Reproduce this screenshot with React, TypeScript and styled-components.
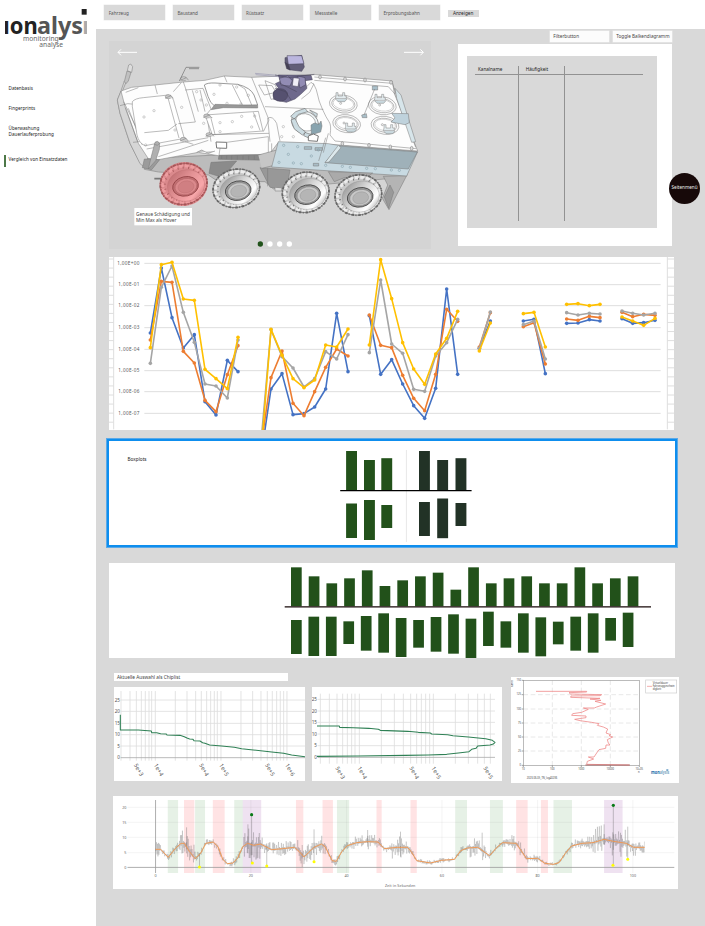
import React from "react";
import styled, { createGlobalStyle } from "styled-components";

const GlobalStyle = createGlobalStyle`
  * { box-sizing: border-box; }
  body { margin: 0; background: #fff; }
  body, text { font-family: "Noto Sans", "Open Sans", sans-serif; }
`;

const Page = styled.div`
  position: relative;
  display: grid;
  grid-template-columns: 96.3px 1fr;
  width: 705px;
  height: 926px;
  overflow: hidden;
  background: #fff;
  color: #3c3c3c;
  font-size: 4.6px;
  line-height: 6px;
`;
const Sidebar = styled.aside`
  padding-top: 8px;
`;
const LogoArt = styled.svg`
  display: block;
  margin-left: 5px;
`;
const Nav = styled.nav`
  display: flex;
  flex-direction: column;
  margin-top: 35px;
  color: #222;
`;
const NavItem = styled.a<{ $gap?: number; $active?: boolean }>`
  display: block;
  height: ${(p) => (p.$active ? 12.5 : 6)}px;
  margin: ${(p) => p.$gap ?? 0}px 0 0 4px;
  padding-left: ${(p) => (p.$active ? 2.5 : 4.5)}px;
  padding-top: ${(p) => (p.$active ? 1 : 0)}px;
  border-left: ${(p) => (p.$active ? "2px solid #4d7848" : "0")};
  white-space: nowrap;
  letter-spacing: 0.04px;
`;
const Content = styled.div`
  display: flex;
  flex-direction: column;
`;
const FilterBar = styled.header`
  display: flex;
  height: 29px;
  flex: none;
  padding: 5.4px 0 0 7.9px;
  gap: 7.7px;
`;
const FilterBox = styled.div`
  width: 61px;
  height: 15px;
  padding: 4.8px 4.5px;
  background: #d9d9d9;
  box-shadow: 0 0 0 0.5px #eee;
  color: #555;
`;
const ShowButton = styled.button`
  width: 31px;
  height: 7.4px;
  margin-top: 4.5px;
  padding: 0;
  border: 0;
  background: #d9d9d9;
  font: 4.7px/7.4px "Noto Sans", sans-serif;
  color: #222;
`;
const Workspace = styled.main`
  flex: 1;
  padding-left: 12.7px;
  background: #d9d9d9;
`;
const TopRow = styled.section`
  display: flex;
  justify-content: space-between;
  width: 563.3px;
  height: 220px;
`;
const VehiclePanel = styled.div`
  width: 322px;
  height: 208px;
  margin-top: 12px;
  background: #d4d4d4;
`;
const Art = styled.svg`
  display: block;
  overflow: hidden;
`;
const TableColumn = styled.div`
  width: 214px;
`;
const TableActions = styled.div`
  display: flex;
  justify-content: flex-end;
  gap: 3.5px;
  padding-top: 2.4px;
`;
const SmallButton = styled.button`
  width: 59.5px;
  height: 10.3px;
  padding: 0 3.5px;
  border: 0;
  background: #fcfcfc;
  box-shadow: 0 0 0 0.5px #eee;
  text-align: left;
  white-space: nowrap;
  font: 4.65px/11px "Noto Sans", sans-serif;
  color: #444;
`;
const TableCard = styled.div`
  height: 202px;
  margin-top: 2.8px;
  padding: 11.5px 15px 18px 9px;
  background: #fff;
`;
const TableSurface = styled.div`
  height: 172px;
  padding: 10px 14px 7px 8px;
  background: #d9d9d9;
`;
const Table = styled.div`
  display: grid;
  grid-template-columns: 44px 46px 1fr;
  grid-template-rows: 9.5px 1fr;
  height: 155px;
`;
const Cell = styled.div<{ $head?: boolean; $last?: boolean; $inset?: number }>`
  padding-left: ${(p) => p.$inset ?? 0}px;
  border-right: ${(p) => (p.$last ? "0" : "1px solid #929292")};
  border-bottom: ${(p) => (p.$head ? "1px solid #929292" : "0")};
  color: #222;
`;
const Panel = styled.section<{ $w: number; $h: number; $top?: number; $left?: number }>`
  width: ${(p) => p.$w}px;
  height: ${(p) => p.$h}px;
  margin: ${(p) => p.$top ?? 0}px 0 0 ${(p) => p.$left ?? 0}px;
  background: #fff;
  overflow: hidden;
`;
const SelectedPanel = styled.section`
  display: flex;
  width: 569.6px;
  height: 108px;
  margin: 9px 0 0 -2px;
  border: 2.4px solid #0e8eee;
  outline: 0.5px solid #5aa9e8;
  outline-offset: -0.5px;
  background: #fff;
`;
const PanelTitle = styled.h2`
  width: 229px;
  margin: 0;
  padding: 15.5px 0 0 18.5px;
  font: 4.7px/6px "Noto Sans", sans-serif;
  color: #222;
`;
const CompareRow = styled.section`
  display: flex;
  gap: 9px;
  margin: 15px 0 0 5px;
`;
const ChipList = styled.div`
  width: 174.5px;
  height: 8px;
  margin-bottom: 6px;
  padding-left: 3px;
  background: #fff;
  font-size: 4.75px;
  line-height: 8px;
`;
const Pair = styled.div`
  display: flex;
  gap: 6.5px;
`;
const SideMenu = styled.button`
  position: absolute;
  left: 669px;
  top: 173px;
  width: 31px;
  height: 31px;
  padding: 0 0 3px;
  border: 0;
  border-radius: 50%;
  background: #170909;
  color: #eee;
  font: 4.6px/6px "Noto Sans", sans-serif;
`;

/* ---------- logo ---------- */
const Logo = () => (
  <LogoArt width="82" height="42" viewBox="15 24 246 126">
    <g fontWeight="700" fontSize="68">
      <text x="9" y="102" fill="#222">ı</text>
      <text x="29" y="102" fill="#222" textLength="84" lengthAdjust="spacingAndGlyphs">on</text>
      <text x="111" y="102" fill="#555" textLength="138" lengthAdjust="spacingAndGlyphs">alys</text>
      <text x="247" y="102" fill="#aaa">ı</text>
    </g>
    <rect x="245" y="27" width="15" height="17" fill="#222" />
    <g fontSize="20" fill="#666">
      <text x="69" y="122" textLength="107">monitoring</text>
      <text x="118" y="140" textLength="71">analyse</text>
    </g>
  </LogoArt>
);

/* ---------- vehicle ---------- */
type Pt = [number, number];

const Wheel = ({ x, y, ry = 60, red }: { x: number; y: number; ry?: number; red?: boolean }) => (
  <g transform={`translate(${x} ${y}) rotate(-12)`} fill="none">
    <ellipse rx="71" ry={ry} fill="#c8c8c8" stroke="#666" strokeWidth="2" />
    <ellipse rx="70" ry={ry} stroke="#666" strokeWidth="6" strokeDasharray="3 4 8 5" />
    <ellipse rx="63" ry={ry - 7} stroke="#ececec" strokeWidth="9" strokeDasharray="12 5" />
    <ellipse rx="57" ry={ry - 12} stroke="#777" strokeWidth="6" strokeDasharray="3 13" />
    <ellipse cx="6" cy="6" rx="56" ry={ry - 14} fill="url(#tyre)" stroke="#888" />
    <ellipse cx="4" cy="8" rx="39" ry="29" fill="#999" stroke="#444" strokeWidth="2.5" />
    <ellipse cx="5" cy="9" rx="33" ry="24" fill="#c8c8c8" stroke="#666" />
    <ellipse cx="5" cy="10" rx="24" ry="18" fill="#b5b5b5" stroke="#888" />
    {red && <ellipse rx="73" ry="66" fill="#ef3f46" fillOpacity=".46" />}
  </g>
);

const Hatch = ({ x, y, low }: { x: number; y: number; low?: boolean }) => (
  <g transform={`translate(${x} ${y})`} fill="none" stroke="#777" strokeWidth="1.4">
    <g transform="rotate(8)">
      <ellipse rx="42" ry="27" fill="#fbfbfb" />
      <ellipse rx="35" ry="21" fill="#fff" />
      <ellipse cy="-1" rx="31" ry="17" stroke="#aaa" />
    </g>
    <g transform={`translate(${low ? 12 : -7} ${low ? 12 : -20})`}>
      <path d="M-15-4v-10h6v10h14v-10h6v10h5v8h-33z" fill="#e3ecef" />
      <path d="M-15 6l6 7h20l7-8" fill="#c9d8de" />
    </g>
    <circle cx="-8" cy="-2" r="3" />
  </g>
);

const bolts: Pt[] = [
  [147, 227], [117, 246], [230, 217], [210, 285], [122, 330], [327, 178], [366, 205], [395, 156],
  [382, 260], [345, 263], [410, 244], [430, 181], [345, 290], [408, 207], [345, 150], [296, 265],
  [449, 243], [275, 170], [288, 195], [440, 276], [304, 210], [535, 275], [530, 305], [565, 305],
];
const sideBolts: Pt[] = [
  [536, 331], [578, 335], [550, 358], [619, 363], [522, 382], [565, 384], [589, 386], [662, 391],
  [712, 394], [736, 397], [785, 400], [811, 401], [859, 405], [883, 406], [640, 345],
];

const Vehicle = () => (
  <Art width="322" height="208" viewBox="12 18 966 624">
    <defs>
      <linearGradient id="tyre" x1="0" y1="0" x2="1" y2="1">
        <stop offset="0" stopColor="#888" />
        <stop offset=".45" stopColor="#d8d8d8" />
        <stop offset=".75" stopColor="#fff" />
        <stop offset="1" stopColor="#888" />
      </linearGradient>
    </defs>
    <g stroke="#fff" strokeWidth="3" fill="none">
      <path d="M96 52H39M48 43L39 52L48 61" />
      <path d="M897 52H955M946 43L955 52L946 61" />
    </g>

    <g stroke="#777" strokeWidth="1.5" strokeLinejoin="round">
      {/* lower hull */}
      <path d="M127 370L118 403L160 411L310 420L340 440L480 440L505 462L860 430L905 422L920 380L540 350Z" fill="#bcbcbc" />
      <path d="M148 431h22M400 470h30" strokeWidth="5" />
      <path d="M318 382L395 378L372 405L345 425L312 415Z" fill="#8b8b8b" />
      <path d="M465 398L555 405L545 462L495 457Z" fill="#989898" />
      <path d="M488 400V454M510 458v10h20v-8" fill="#ddd" />
      <path d="M835 424L905 422L852 524L832 490L848 450Z" fill="#b4b4b4" />
      <path d="M855 450L866 472L851 520L838 486Z" fill="#999" />
      {/* armoured roof */}
      <path d="M48 168L80 157L150 150L235 141L300 136L358 123L440 127L630 119L862 138L868 176L938 348L690 329L520 322L490 362L340 362L280 352L160 374L127 370L105 383L75 325L45 235L37 195Z" fill="#fdfdfd" />
      <path d="M48 168L37 195L45 235L75 325L105 386L120 398L128 368L100 325L62 222Z" fill="#d6d6d6" />
      <path d="M45 212L68 206L90 208M84 322L104 320M70 220L112 330M56 200L95 280M62 218L98 320" fill="none" />
      <path d="M118 372L164 374L140 404L112 398Z" fill="#9b9b9b" />
      <path d="M82 200Q90 190 115 188L190 180Q205 185 208 205L238 310L120 332Q102 325 96 300L82 215Z" fill="#fff" />
      <path d="M150 150L157 177M235 141L243 164L271 261L220 266M188 185L222 309M205 170L229 143M240 165L294 160L318 222L305 238L318 320M62 172L100 158M118 293L190 286L216 267M125 342L310 308M160 365L310 316M240 320L265 328M285 165L300 230M262 166L280 230" fill="none" />
      <path d="M298 150Q306 143 330 144L398 148Q437 158 447 180L458 210L330 214Q315 205 309 184Z" fill="#fff" strokeWidth="2.2" />
      <path d="M330 208L458 211V219L355 218L318 224Z" fill="#999" />
      <path d="M398 148L420 162L440 210M382 150L412 210M358 123L366 142M440 127L480 225L492 255L475 290" fill="none" />
      <path d="M300 240L460 229L474 288L322 299Z" fill="#fff" />
      <path d="M445 232L465 286M318 250L330 298M300 248h22M480 137l30 12 18 38-30 6zM461 150l40 2 12 20-35 8z" fill="none" />
      <path d="M322 299L492 295M365 322L490 305V358L342 361L345 340Z" fill="none" />
      <path d="M333 321L365 322V340L335 339Z" fill="#fff" strokeWidth="3" />
      <path d="M342 361L490 359L487 376L340 373Z" fill="#888" />
      <path d="M350 362v10M365 362v10M380 362v12M397 362v12M414 362v12M431 362v12M448 362v12M465 362v12" />
      <path d="M480 215L655 223M495 320L488 250Q502 240 515 265L525 318M500 325v30h-15" fill="none" />
      <path d="M275 352L290 345L310 355L330 348M460 360L515 345L512 390L470 400" fill="#c6c6c6" />
      {[[190, 185], [235, 313], [236, 131], [312, 299], [305, 243]].map(([x, y]) => (
        <g key={x} transform={`translate(${x} ${y})`} fill="#ccc">
          <ellipse rx="9" ry="6" /><path d="M-10 5L8-3L15 5" />
        </g>
      ))}
      <g fill="none" stroke="#999" strokeWidth="1.4">
        {bolts.map(([x, y]) => <circle key={`${x}-${y}`} cx={x} cy={y} r="3.5" />)}
      </g>
      {/* rear roof */}
      <path d="M628 126L862 145L932 337M628 136L850 155L870 177M625 145Q636 165 638 180T652 222T672 260T675 300L690 318L934 341" fill="none" />
      <path d="M870 160L888 180L932 320L920 322L875 190Z" fill="#d7e5ea" />
      {[[645, 126], [720, 132], [780, 135], [858, 142], [712, 326], [792, 331], [856, 336], [920, 340]].map(([x, y]) => (
        <ellipse key={x} cx={x} cy={y} rx="4" ry="6" fill="#ddd" />
      ))}
      <Hatch x={715} y={207} />
      <Hatch x={832} y={212} />
      <Hatch x={725} y={266} low />
      <Hatch x={840} y={271} low />
      <path d="M809 162L777 240M802 153h16v12h-16zM770 240l14-4 2 12h-14z" fill="#a9bfc9" />
      <path d="M860 235L910 236L913 263L900 269L858 261L870 249Z" fill="#bfd2dc" />
      {/* open roof ring */}
      <ellipse cx="600" cy="263" rx="42" ry="34" transform="rotate(25 600 263)" fill="#eef4f6" strokeWidth="2" />
      <ellipse cx="602" cy="262" rx="31" ry="25" transform="rotate(25 602 262)" fill="#fff" />
      <path d="M557 244L572 230L600 220L608 230L580 238L568 252ZM558 255L570 250L582 275L602 292L592 300L568 282ZM600 292L628 303L618 312L596 302ZM614 225L637 236L635 247Z" fill="#ccdce2" strokeWidth="2" />
      <path d="M618 270l10-6 14 4 6-10 3 15-4 18-28 8z" fill="#89a4af" />
      <path d="M610 303l15-6 15 6-3 16-27-2z" fill="#fff" strokeWidth="3" />
      {/* blue side armour */}
      <path d="M520 320L670 326L700 331L938 350L905 423L680 408L500 396Z" fill="#c8dae2" />
      <path d="M702 333L937 351L910 402L660 383Z" fill="#9fb1b9" />
      <path d="M700 331L660 383L672 381L708 338ZM670 295L655 353M662 308L641 378" fill="#dce9ed" />
      <path d="M598 335h22v8h-22zM630 338h22v8h-22zM625 385h16v8h-16z" fill="#a9bdc6" />
      <g fill="none" stroke="#7c98a3" strokeWidth="1.5">
        {sideBolts.map(([x, y]) => <circle key={`${x}-${y}`} cx={x} cy={y} r="3.5" />)}
      </g>
      <path d="M670 410l18 30 30-12 30-2 20 14 35-26z" fill="#aaa" />
      {/* weapon station */}
      <g stroke="#454358" strokeWidth="1.6">
        <path d="M450 115L530 122M452 119L530 126" stroke="#8a88a8" />
        <path d="M540 68L590 61L598 96L590 109L552 104L540 82Z" fill="#625e78" />
        <path d="M546 62L590 62L597 86L550 88Z" fill="#bbb6de" />
        <path d="M540 82L550 88L556 105L545 101Z" fill="#454155" />
        <path d="M520 120L618 121L622 134L600 137L606 160L587 178L570 192L544 202L506 193L506 170L520 158L511 146L526 139Z" fill="#6e698c" />
        <path d="M523 130L548 123L562 137L555 153L529 151ZM578 123L600 128L602 149L585 159Z" fill="#928cb4" />
        <path d="M565 128l18 2-4 25-17-3z" fill="#f0eef7" />
        <ellipse cx="526" cy="180" rx="22" ry="19" fill="#565170" />
        <path d="M510 160l32 10 16 25M525 145l50 25M510 120L550 128L628 118" fill="none" />
      </g>
      <path d="M600 160l18-18 8 6-12 24-25 20" fill="none" />
      {/* mirrors */}
      <path d="M48 167L58 138M53 166L64 140" fill="none" />
      <path d="M58 140L66 108L78 112L70 138L63 146Z" fill="#c0c0c0" />
      <path d="M67 107L71 90L77 87L83 95L80 112Z" fill="#ddd" />
      <path d="M130 402L139 364L150 322Q158 315 164 325L163 343L152 377Z" fill="#b0b0b0" />
      <path d="M148 328Q158 335 164 325" fill="none" />
      <path d="M223 138L243 97h40M252 101h30" fill="none" strokeWidth="2.2" />
    </g>

    <Wheel x={236} y={447} ry={61} red />
    <Wheel x={394} y={460} ry={57} />
    <Wheel x={602} y={472} />
    <Wheel x={760} y={480} />

    <rect x="88" y="519" width="173" height="52" fill="#fff" />
    <g fontSize="14.2" fill="#444">
      <text x="93" y="543" textLength="162">Genaue Schädigung und</text>
      <text x="93" y="560" textLength="121">Min Max als Hover</text>
    </g>
    {[466, 495, 524, 553].map((x, i) => (
      <circle key={x} cx={x} cy="627" r="8" fill={i === 0 ? "#20521a" : "#fff"} />
    ))}
  </Art>
);

/* ---------- line chart ---------- */
const xs = [
  [136, 169, 201, 235, 268, 300, 333, 367, 399],
  [465, 498, 531, 564, 597, 629, 662, 695, 729],
  [793, 827, 860, 893, 926, 959, 992, 1025, 1058],
  [1123, 1156],
  [1255, 1287, 1321],
  [1385, 1419, 1453, 1485],
  [1551, 1583, 1616, 1650],
];
const series = [
  { color: "#4472c4", ys: [[249, 54, 203, 294, 254, 455, 495, 331, 365], [640, 417, 371, 494, 491, 471, 417, 190, 365], [197, 373, 329, 402, 467, 505, 415, 117, 373], [295, 213], [213, 208, 371], [220, 219, 209, 213], [206, 220, 218, 211]] },
  { color: "#ed7d31", ys: [[270, 94, 97, 304, 339, 451, 485, 374, 287], [610, 383, 303, 460, 497, 425, 352, 297, 318], [195, 286, 293, 376, 445, 482, 373, 178, 214], [291, 188], [230, 218, 342], [207, 211, 199, 203], [187, 200, 193, 196]] },
  { color: "#a5a5a5", ys: [[340, 112, 48, 187, 277, 402, 408, 444, 270], [610, 239, 320, 354, 411, 386, 305, 327, 254], [308, 90, 282, 310, 418, 424, 318, 278, 208], [295, 186], [224, 213, 327], [188, 195, 190, 192], [183, 190, 195, 190]] },
  { color: "#ffc000", ys: [[293, 44, 37, 147, 151, 358, 386, 416, 262], [650, 238, 316, 386, 413, 390, 285, 291, 237], [285, 29, 146, 278, 357, 403, 312, 265, 184], [303, 219], [191, 187, 291], [163, 161, 167, 163], [201, 213, 226, 205]] },
];
const LineChart = () => (
  <Art width="565.5" height="172.5" viewBox="12 21 1696.5 517.5">
    <g stroke="#dedede" strokeWidth="3">
      {[40, 104, 167, 233, 298, 362, 425, 490].map((y) => <path key={y} d={`M118 ${y}H1667`} />)}
      <path d="M26 21V538M1687 21V538" />
      {Array.from({ length: 19 }, (_, i) => (
        <path key={i} d={`M12 ${27 + i * 27.2}H26M1687 ${27 + i * 27.2}H1708`} />
      ))}
    </g>
    <g fontSize="14" fill="#595959">
      {[40, 104, 167, 233, 298, 362, 425, 490].map((y, i) => (
        <text key={y} x={i ? 40 : 37} y={y + 5} textLength={i ? 63 : 66}>{i ? `1,00E-0${i}` : "1,00E+00"}</text>
      ))}
    </g>
    {series.map((s) =>
      s.ys.map((ys, g) => (
        <g key={g} fill={s.color}>
          <polyline points={ys.map((y, i) => `${xs[g][i]},${y}`).join(" ")} fill="none" stroke={s.color} strokeWidth="4.8" strokeLinejoin="round" />
          {ys.map((y, i) => <circle key={i} cx={xs[g][i]} cy={y} r="5.4" />)}
        </g>
      )),
    )}
  </Art>
);

/* ---------- bar charts ---------- */
const boxes: { x: number; top: number; low: Pt; dark?: boolean }[] = [
  { x: 346.1, top: 451, low: [503.5, 538] },
  { x: 364, top: 460, low: [500, 540] },
  { x: 381.3, top: 458.2, low: [505, 528] },
  { x: 419, top: 451, low: [502, 536], dark: true },
  { x: 437.2, top: 460, low: [498.5, 538.2], dark: true },
  { x: 455.5, top: 458.2, low: [503, 526], dark: true },
];
const BoxChart = () => (
  <Art width="140" height="102" viewBox="338 441 140 102">
    <path d="M406.4 450V542" stroke="#e8e8e8" />
    {boxes.map((b) => (
      <g key={b.x} fill={b.dark ? "#223226" : "#22511a"}>
        <rect x={b.x} y={b.top} width="10.9" height={490 - b.top} />
        <rect x={b.x} y={b.low[0]} width="10.9" height={b.low[1] - b.low[0]} />
      </g>
    ))}
    <path d="M340.2 490.7H471.6" stroke="#000" strokeWidth="1.3" />
  </Art>
);
const tops = [37, 64, 85, 70, 46, 93, 76, 64, 53, 104, 37, 85, 70, 64, 85, 85, 37, 85, 70, 64];
const lows: Pt[] = [
  [195, 297], [185, 303], [185, 303], [199, 267], [183, 287], [175, 293], [189, 306], [195, 278], [186, 290], [178, 296],
  [191, 309], [170, 273], [199, 278], [175, 293], [187, 304], [200, 268], [185, 287], [175, 293], [189, 257], [173, 276],
];
const BarChart = () => (
  <Art width="566" height="95" viewBox="109 563 566 95">
    <g fill="#22511a">
      {tops.map((t, i) => <rect key={i} x={291 + i * 17.72} y={555 + t / 3} width="10.7" height={51.3 - t / 3} />)}
      {lows.map(([a, b], i) => <rect key={i} x={291 + i * 17.46} y={555 + a / 3} width="10.7" height={(b - a) / 3} />)}
    </g>
    <path d="M284.7 606.8H651" stroke="#170909" strokeWidth="1.3" />
  </Art>
);

/* ---------- load spectra ---------- */
interface SpectrumProps {
  view: string;
  width: number;
  vertical: number[];
  horizontal: number[];
  span: [number, number, number, number];
  labels: [string, number][];
  curve: string;
}
const Spectrum = ({ view, width, vertical, horizontal, span, labels, curve }: SpectrumProps) => (
  <Art width={width} height="93.7" viewBox={view}>
    <g stroke="#dcdcdc" strokeWidth="2.4">
      {vertical.map((x) => <path key={x} d={`M${x} ${span[2]}V${span[3]}`} />)}
      {horizontal.map((y, i) => <path key={y} d={`M${span[0]} ${y}H${span[1]}`} stroke={i === 5 ? "#aaa" : "#ddd"} />)}
    </g>
    <g fontSize="14" fill="#555">
      {horizontal.map((y, i) => (
        <text key={y} x={span[0] - 2} y={y + 5} textAnchor="end">{25 - i * 5}</text>
      ))}
      {labels.map(([t, x]) => (
        <text key={x} transform={`translate(${x} ${span[3] + 13}) rotate(60)`} fontSize="17" textLength="40">{t}</text>
      ))}
    </g>
    <polyline points={curve} fill="none" stroke="#2f8055" strokeWidth="3.2" strokeLinejoin="round" />
  </Art>
);

const speed =
  "108,65 260,65 260,67 207,69 212,73 305,75 300,78 213,79 212,83 300,86 270,88 303,92 285,95 317,103 290,112 283,115 250,115 265,119 245,128 218,132 215,137 258,139 258,144 224,149 240,153 275,158 297,162 292,167 310,172 323,178 318,190 332,195 327,198 338,202 322,210 325,220 330,226 318,226 317,236 297,240 290,250 282,262 265,262 281,268 262,275 260,284 388,286";
const SpeedChart = () => (
  <Art width="168" height="106" viewBox="33 22 504 318">
    <g stroke="#ddd" strokeWidth="2" strokeDasharray="14 8">
      {[75, 118, 160, 202, 244].map((y) => <path key={y} d={`M70 ${y}H418`} />)}
      {[157, 244, 331].map((x) => <path key={x} d={`M${x} 32V287`} />)}
    </g>
    <rect x="70" y="32" width="348" height="255" fill="none" stroke="#999" strokeWidth="2" />
    <g stroke="#777" strokeWidth="2">
      {[32, 75, 118, 160, 202, 244, 287].map((y) => <path key={y} d={`M65 ${y}h5`} />)}
      {[70, 157, 244, 331, 418].map((x) => <path key={x} d={`M${x} 287v5`} />)}
    </g>
    <polyline points={speed} fill="none" stroke="#ee8585" strokeWidth="2.3" />
    <path d="M256 286H390" stroke="#9b4949" strokeWidth="2" />
    <g fontSize="8" fill="#444">
      {["150", "125", "100", "75", "50", "25", "0"].map((t, i) => (
        <text key={t} x="63" y={35 + i * 42.5} textAnchor="end">{t}</text>
      ))}
      {["10", "100", "1000", "10000", "10+05"].map((t, i) => (
        <text key={t} x={70 + i * 87} y="300" textAnchor="middle">{t}</text>
      ))}
      <text x="414" y="310">n</text>
      <text transform="translate(40 51) rotate(-90)">km/h</text>
      <text x="80" y="328" textLength="92" lengthAdjust="spacingAndGlyphs" fontSize="9">2023-06-05_TN_log40236</text>
      <text x="458" y="43" textLength="46" lengthAdjust="spacingAndGlyphs">Virtueldauer</text>
      <text x="458" y="52" textLength="66" lengthAdjust="spacingAndGlyphs">Fahrzeuggeschwin</text>
      <text x="458" y="61">digkeit</text>
    </g>
    <rect x="437" y="31" width="93" height="39" fill="none" stroke="#ccc" strokeWidth="2" />
    <path d="M441 50h15" stroke="#ee8585" strokeWidth="2" />
    <g fontSize="14" fontWeight="700">
      <text x="453" y="313" fill="#176aa8" textLength="26" lengthAdjust="spacingAndGlyphs">mon</text>
      <text x="479" y="313" fill="#7aa3c0" textLength="29" lengthAdjust="spacingAndGlyphs">alysis</text>
    </g>
    <path d="M499 301h6" stroke="#176aa8" strokeWidth="3" />
  </Art>
);

/* ---------- timeline ---------- */
const X = (v: number) => v / 2.7065;
const Y = (v: number) => v / 3;
const trend: Pt[] = [
  [136, 178], [150, 178], [170, 202], [190, 175], [205, 160], [214, 160], [228, 185], [243, 206], [258, 190], [272, 160],
  [292, 156], [305, 170], [318, 208], [330, 221], [345, 219], [358, 205], [372, 170], [385, 160], [402, 166], [420, 162],
  [450, 179], [480, 176], [512, 172], [525, 185], [538, 201], [550, 188], [565, 172], [585, 162], [595, 170], [614, 212],
  [625, 214], [640, 185], [655, 167], [680, 158], [710, 155], [738, 156], [755, 176], [790, 172], [818, 172], [828, 185],
  [843, 212], [880, 219], [910, 211], [945, 208], [962, 182], [980, 174], [1008, 172], [1040, 197], [1060, 172], [1075, 158],
  [1112, 160], [1128, 186], [1140, 206], [1170, 205], [1190, 220], [1212, 223], [1228, 218], [1245, 190], [1262, 168],
  [1290, 160], [1320, 158], [1350, 148], [1375, 154], [1410, 160], [1430, 172], [1460, 172],
];
const lively: [number, number, number][] = [
  [136, 150, 20], [200, 243, 38], [375, 420, 42], [420, 512, 20], [520, 600, 28], [660, 745, 21], [775, 828, 32],
  [840, 960, 7], [985, 1030, 28], [1100, 1135, 24], [1180, 1245, 6], [1265, 1320, 18], [1320, 1412, 40], [1412, 1462, 24],
];
const trendAt = (v: number) => {
  const i = Math.max(1, trend.findIndex((p) => p[0] >= v));
  const [a, b] = [trend[i - 1], trend[i]];
  return a[1] + ((b[1] - a[1]) * (v - a[0])) / (b[0] - a[0]);
};
const signal = (() => {
  let seed = 41;
  const rnd = () => (seed = (seed * 16807) % 2147483647) / 2147483647;
  const pts: string[] = [];
  for (let v = 136, up = 1; v < 1460; v += 1.3, up = -up) {
    const amp = lively.find(([a, b]) => v >= a && v < b)?.[2] ?? 12;
    const y = trendAt(v) - up * amp * (0.1 + Math.pow(rnd(), 1.9));
    pts.push(`${X(v).toFixed(2)},${Y(Math.min(229, y)).toFixed(2)}`);
  }
  return pts.join(" ");
})();
const bands: { color: string; at: Pt[] }[] = [
  { color: "#e6f1e6", at: [[169, 197], [243, 270], [349, 378], [627, 660], [947, 979], [1041, 1076], [1213, 1263]] },
  { color: "#ffe3e4", at: [[213, 241], [291, 323], [516, 536], [588, 616], [734, 748], [826, 843], [1112, 1143], [1179, 1198]] },
  { color: "#efe2f1", at: [[372, 422], [1350, 1400]] },
];
const spikes: [number, number, number][] = [
  [396, 74, 219], [1375, 46, 226], [255, 190, 231], [437, 160, 228], [565, 118, 215], [1414, 110, 208],
  [220, 112, 190], [386, 103, 190], [533, 165, 231], [710, 120, 170], [799, 125, 200], [1020, 128, 185], [1350, 103, 165],
];
const Timeline = () => (
  <Art width="565" height="93" viewBox="7.7 6 565 93">
    {bands.map((b) => b.at.map(([l, r]) => (
      <rect key={l} x={X(l)} y="10" width={X(r - l)} height="73" fill={b.color} />
    )))}
    <g stroke="#777" strokeOpacity=".12" strokeWidth=".7">
      {[52, 97, 142, 188].map((y) => <path key={y} d={`M${X(60)} ${Y(y)}H${X(1540)}`} />)}
      {[394, 653, 911, 1170, 1428].map((x) => <path key={x} d={`M${X(x)} 10V83`} />)}
    </g>
    <path d={`M${X(60)} 77.4H${X(1540)}M${X(136)} 10V83`} stroke="#999" strokeWidth=".8" />
    <polyline points={signal} fill="none" stroke="#555" strokeOpacity=".42" strokeWidth=".48" />
    <g stroke="#555" strokeOpacity=".55" strokeWidth=".6">
      {spikes.map(([x, a, b]) => <path key={x} d={`M${X(x)} ${Y(a)}V${Y(b)}`} />)}
    </g>
    <polyline points={trend.map(([x, y]) => `${X(x)},${Y(y)}`).join(" ")} fill="none" stroke="#f5954a" strokeWidth=".9" strokeLinejoin="round" />
    {[[396, 74], [1375, 46]].map(([x, y]) => <circle key={x} cx={X(x)} cy={Y(y)} r="1.6" fill="#087a16" />)}
    {[[255, 231], [398, 219], [437, 228], [565, 215], [1374, 226], [1414, 208]].map(([x, y]) => (
      <circle key={x} cx={X(x)} cy={Y(y)} r="1.5" fill="#ff0" />
    ))}
    <g fontSize="3.7" fill="#666">
      {[52, 97, 142, 188, 232].map((y, i) => <text key={y} x={X(57)} y={Y(y) + 1.3} textAnchor="end">{20 - i * 5}</text>)}
      {[136, 394, 653, 911, 1170, 1428].map((x, i) => <text key={x} x={X(x)} y="87" textAnchor="middle">{i * 20}</text>)}
      <text x={X(798)} y="96.6" textAnchor="middle" textLength="30.5">Zeit in Sekunden</text>
    </g>
  </Art>
);

export default function App() {
  return (
    <>
      <GlobalStyle />
      <Page>
        <Sidebar>
          <Logo />
          <Nav>
            <NavItem>Datenbasis</NavItem>
            <NavItem $gap={14.3}>Fingerprints</NavItem>
            <NavItem $gap={14}>Überwashung<br />Dauerlauferprobung</NavItem>
            <NavItem $gap={23.5} $active>Vergleich von Einsatzdaten</NavItem>
          </Nav>
        </Sidebar>
        <Content>
          <FilterBar>
            {["Fahrzeug", "Baustand", "Rüstsatz", "Messstelle", "Erprobungsbahn"].map((t) => (
              <FilterBox key={t}>{t}</FilterBox>
            ))}
            <ShowButton>Anzeigen</ShowButton>
          </FilterBar>
          <Workspace>
            <TopRow>
              <VehiclePanel><Vehicle /></VehiclePanel>
              <TableColumn>
                <TableActions>
                  <SmallButton>Filterbutton</SmallButton>
                  <SmallButton>Toggle Balkendiagramm</SmallButton>
                </TableActions>
                <TableCard>
                  <TableSurface>
                    <Table>
                      <Cell $head $inset={2.7}>Kanalname</Cell>
                      <Cell $head $inset={6.5}>Häufigkeit</Cell>
                      <Cell $head $last />
                      <Cell />
                      <Cell />
                      <Cell $last />
                    </Table>
                  </TableSurface>
                </TableCard>
              </TableColumn>
            </TopRow>
            <Panel $w={565.5} $h={172.5} $top={8}><LineChart /></Panel>
            <SelectedPanel>
              <PanelTitle>Boxplots</PanelTitle>
              <BoxChart />
            </SelectedPanel>
            <Panel $w={566} $h={95} $top={16.5}><BarChart /></Panel>
            <CompareRow>
              <div>
                <ChipList>Aktuelle Auswahl als Chiplist</ChipList>
                <Pair>
                  <Panel $w={191.3} $h={93.7}>
                    <Spectrum
                      view="27 67 574 281"
                      width={191.3}
                      span={[47, 601, 79, 288]}
                      vertical={[48, 75, 94, 109, 121, 132, 140, 151, 211, 246, 272, 289, 305, 317, 328, 337, 348, 408, 443, 468, 487, 502, 515, 526, 536, 546]}
                      horizontal={[106, 140, 176, 210, 244, 279]}
                      labels={[["5e+3", 86], ["1e+4", 146], ["5e+4", 282], ["1e+5", 342], ["5e+5", 480], ["1e+6", 540]]}
                      curve="46,150 46,196 100,196 139,199 140,204 155,204 167,207 184,208 186,211 225,212 238,216 246,220 254,223 264,224 267,228 285,229 293,234 300,236 314,241 350,244 388,248 410,252 445,256 500,262 536,266 560,271 600,276"
                    />
                  </Panel>
                  <Panel $w={190} $h={93.7}>
                    <Spectrum
                      view="621 67 570 281"
                      width={190}
                      span={[638, 1170, 87, 297]}
                      vertical={[646, 673, 696, 713, 727, 740, 750, 763, 829, 868, 895, 917, 935, 949, 962, 974, 985, 1051, 1090, 1118, 1138, 1156]}
                      horizontal={[104, 139, 173, 208, 243, 278]}
                      labels={[["5e+3", 691], ["1e+4", 757], ["5e+4", 913], ["1e+5", 979], ["5e+5", 1135]]}
                      curve="636,184 703,184 704,188 745,189 791,191 820,194 826,197 908,200 940,203 976,205 980,208 1028,210 1044,213 1090,217 1142,222 1162,227 1170,233 1165,238 1155,241 1118,244 1113,251 1100,254 1092,261 1060,265 1025,269 970,271 900,272 760,274 636,275"
                    />
                  </Panel>
                </Pair>
              </div>
              <Panel $w={168} $h={106} $top={4.3}><SpeedChart /></Panel>
            </CompareRow>
            <Panel $w={565} $h={93} $top={12.7} $left={3.7}><Timeline /></Panel>
          </Workspace>
        </Content>
        <SideMenu>Seitenmenü</SideMenu>
      </Page>
    </>
  );
}
